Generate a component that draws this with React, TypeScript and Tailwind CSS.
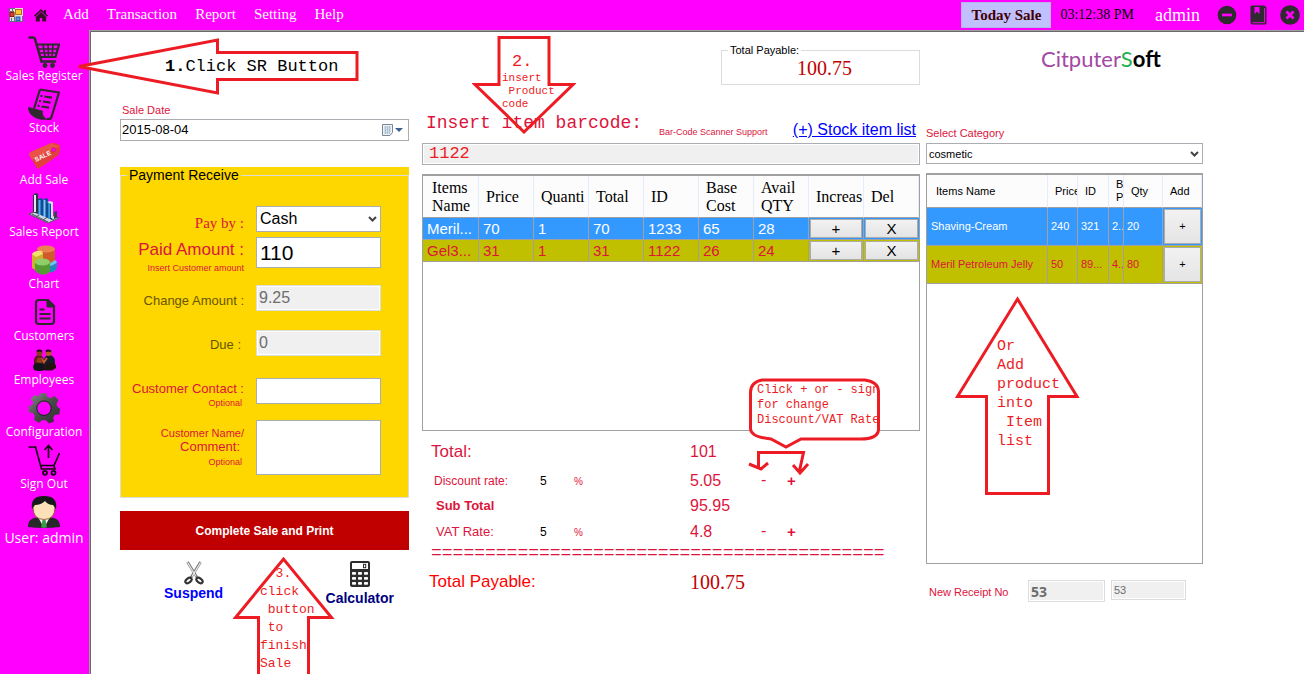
import React from "react";

const sans = "font-['Liberation_Sans',Arial,sans-serif]";
const serif = "font-['Liberation_Serif','Times_New_Roman',serif]";
const mono = "font-['Liberation_Mono',monospace]";
const open = "font-['Open_Sans','Noto_Sans',sans-serif]";

/* ---------- Toolbar icons ---------- */

function FormIcon() {
  return (
    <svg width="14" height="14" viewBox="0 0 14 14" aria-hidden="true">
      <rect width="14" height="14" fill="#e4e0dc" />
      <path d="M.5 0v14M0 .5h6M0 3.5h5M3.500 0v4M0 13.500h14M2.500 10v4M5.500 9v5M13.500 8v5" stroke="#6c6c86" strokeWidth="1" />
      <rect x="6.500" y="1.500" width="6" height="5" fill="#fbc531" stroke="#a8761c" />
      <rect x="1" y="4.500" width="4" height="4" fill="#d8432c" stroke="#8d1f12" />
      <rect x="7" y="9" width="4" height="3.500" fill="#5b92e5" stroke="#2b5cb0" />
    </svg>
  );
}

function HomeIcon() {
  return (
    <svg width="14" height="14" viewBox="0 0 14 14" fill="#3a1028" aria-hidden="true">
      <path d="M7 1 0 7.600l1 1.100 6-5.500 6 5.500 1-1.100-2-1.900V2h-2v1.800z" />
      <path d="M7 4 1.800 9v4.500h4V10h2.400v3.500h4V9z" />
    </svg>
  );
}

function MinusIcon() {
  return (
    <svg width="20" height="20" viewBox="0 0 20 20" aria-hidden="true">
      <circle cx="10" cy="10" r="9.300" fill="#2f2a2f" />
      <rect x="5" y="8.600" width="10" height="2.700" fill="#f0f" />
    </svg>
  );
}

function BookIcon() {
  return (
    <svg width="17" height="20" viewBox="0 0 17 20" aria-hidden="true">
      <path d="M2 .5h12a2 2 0 0 1 1 .5l1.500 1.500V18a1.500 1.500 0 0 1-1.500 1.500H3A2.500 2.500 0 0 1 .5 17V2A1.500 1.500 0 0 1 2 .5z" fill="#2f2a2f" />
      <path d="M4.500 2h5v7L7 6.500 4.500 9z" fill="#f0f" />
      <path d="M2.500 17.700h12V3" fill="none" stroke="#f0f" strokeWidth=".9" />
    </svg>
  );
}

function CloseIcon() {
  return (
    <svg width="20" height="20" viewBox="0 0 20 20" aria-hidden="true">
      <circle cx="10" cy="10" r="9.800" fill="#2f2a2f" />
      <path d="m6.500 6.500 7 7M13.500 6.500l-7 7" stroke="#f0f" strokeWidth="2.700" />
    </svg>
  );
}

/* ---------- Sidebar icons ---------- */

function CartIcon() {
  return (
    <svg width="32" height="32" viewBox="0 0 32 32" fill="none" stroke="#2e2a2e" aria-hidden="true">
      <path d="M1.500 1.500h3.500q1.500 0 2 1.500l6.500 22.500h13.500" strokeWidth="2.500" strokeLinecap="round" />
      <path d="M8.500 8.500h22.500l-3.500 12.500H12" strokeWidth="2.200" />
      <path d="M9.500 13h20.500M10.800 17h18M15 8l2 13M20 8l.5 13M25 8l-1 13" strokeWidth="1.700" />
      <circle cx="17" cy="29.500" r="2.400" fill="#2e2a2e" stroke="none" />
      <circle cx="24.500" cy="29.500" r="2.400" fill="#2e2a2e" stroke="none" />
    </svg>
  );
}

function StockIcon() {
  return (
    <svg width="32" height="32" viewBox="0 0 32 32" fill="none" stroke="#2e2a2e" aria-hidden="true">
      <path d="M12 1.500 31 4.500 23.500 29c-.8 2-2.500 2.500-4.500 2" strokeWidth="2.200" strokeLinejoin="round" />
      <path d="M12 1.500 6 20.500" strokeWidth="2.200" />
      <path d="M.3 19.300 14.500 23c-.5 4 1.500 7.500 5 8-3 .9-5 .7-8 0-6-1.500-11-5-11.200-11.700z" fill="#2e2a2e" strokeWidth=".6" />
      <path d="M16.500 8.500l7.500 1.200M15 13.500l7.500 1.200M13.500 18.500l7.500 1.200" strokeWidth="2.200" />
      <path d="M12.500 8h2M11 13h2M9.500 17.800h2" strokeWidth="2.200" />
    </svg>
  );
}

function SaleIcon() {
  return (
    <svg width="32" height="32" viewBox="0 0 32 32" aria-hidden="true">
      <path d="M1 14.500Q1 13 2.500 12L23 3.200q2-.8 4 0l4.500 1.500q1.500 3 0 7.500-.5 2.500-2.500 4L11 28.500q-1.500 1-2.500-.8z" fill="#e23f3f" />
      <path d="M1 14.500Q1 13 2.500 12L23 3.200l8.500 3L4 20z" fill="#ea5348" />
      <circle cx="25.500" cy="9.800" r="2.200" fill="#f0f" stroke="#b52a3a" strokeWidth=".6" />
      <text x="8" y="22" transform="rotate(-26 8 22)" fontSize="6.500" fontWeight="700" fill="#fff" fontFamily="Liberation Sans">SALE</text>
    </svg>
  );
}

function ReportIcon() {
  return (
    <svg width="32" height="32" viewBox="0 0 32 32" aria-hidden="true">
      <path d="M1 22 20 31l11-5L12 18z" fill="#cfd6de" stroke="#515a66" />
      <path d="M4 22l16 8M9 20l17 8M8 25l9-6M15 28l9-6" stroke="#4a525e" strokeWidth="1" />
      <path d="M5 3l3-2 2 1v20l-5-2z" fill="#2b3441" />
      <path d="M6 3h2v17H6z" fill="#dce8f5" />
      <path d="M10 7l3-1 2 1v17l-5-2z" fill="#0e4b94" />
      <path d="M10.500 8h2v15h-2z" fill="#58adf0" />
      <path d="M15 8l3-2 2 1v19l-5-2z" fill="#0e4b94" />
      <path d="M15.500 8h2v17h-2z" fill="#7cc4fa" />
      <path d="M20 11l2-2 2 1v18l-4-2z" fill="#0e4b94" />
      <path d="M20.300 11h1.700v16h-1.700z" fill="#4299e3" />
      <path d="M19 10l3-1 3 1v16h-2V12z" fill="#d7e0e9" />
      <path d="M26 20l3-1v7l-3 1z" fill="#3a4351" />
    </svg>
  );
}

function ChartIcon() {
  return (
    <svg width="32" height="32" viewBox="0 0 32 32" aria-hidden="true">
      <path d="M9 5v16q10 4 18 0V5z" fill="#cf5a2c" />
      <ellipse cx="18" cy="5" rx="9" ry="3.500" fill="#ea8350" />
      <path d="M4 10v14q5 4 11 2V9z" fill="#cdb02c" />
      <path d="M4 10q3-4 10-3l1 3-7 3z" fill="#f0e070" />
      <path d="M21 20v8q6 1 8-4v-7z" fill="#2586bd" />
      <path d="M21 20l6-4 2 2q-2 3-8 4z" fill="#6cc7ee" />
      <path d="M7 18v9q8 7 15 1V17z" fill="#569c35" />
      <ellipse cx="14.500" cy="18" rx="7.500" ry="3.500" fill="#8fcf6a" />
    </svg>
  );
}

function CustomersIcon() {
  return (
    <svg width="32" height="32" viewBox="0 0 32 32" fill="none" stroke="#2e2a2e" aria-hidden="true">
      <path d="M20 4H11a3 3 0 0 0-3 3v18a3 3 0 0 0 3 3h12a3 3 0 0 0 3-3V10z" strokeWidth="2.200" />
      <path d="M19 3.500V11h7.500z" fill="#2e2a2e" strokeWidth="1" />
      <path d="M11.500 13.500h5M11.500 18h11M11.500 22.500h11" strokeWidth="2" />
    </svg>
  );
}

function EmployeesIcon() {
  return (
    <svg width="26" height="24" viewBox="0 0 26 24" aria-hidden="true">
      <path d="M3 12q1-5 5-5t5 5v7H3z" fill="#5a1c1c" />
      <path d="M13 12q1-5 5-5t6 5v7H13z" fill="#191a2a" />
      <circle cx="8.500" cy="5" r="3" fill="#8a3c1c" />
      <circle cx="17.500" cy="5" r="3" fill="#b4581f" />
      <path d="M6 3.500q2-2 5 0M15 3.500q2-2 5 0" stroke="#1b1010" strokeWidth="2" fill="none" />
      <path d="M10 10l3 4 3-4" stroke="#c9602a" strokeWidth="2" fill="none" />
      <circle cx="8.500" cy="12.500" r="3" fill="#8e3c1c" />
      <path d="M2 19q1-5 7-4t5 7q-6 2-11 0z" fill="#14131a" />
      <path d="M14 20q0-5 6-5t5 5l-4 2.500h-7z" fill="#23130e" />
    </svg>
  );
}

function GearIcon() {
  return (
    <svg width="32" height="32" viewBox="0 0 32 32" aria-hidden="true">
      <defs>
        <linearGradient id="gear" x1="0" y1="0" x2="1" y2="1">
          <stop offset="0" stopColor="#8a8a8a" />
          <stop offset=".5" stopColor="#4a4a4a" />
          <stop offset="1" stopColor="#2c2c2c" />
        </linearGradient>
      </defs>
      <path
        fill="url(#gear)"
        fillRule="evenodd"
        d="M12 1.500l6-.5 1.500 4 3 1 4-2L30.500 8 28.500 12l.8 3 2.700 1.500-.7 6-4.300.3-1.800 2.700.8 4-5 2-3-3.300h-4l-3 2.500-5-2.700.8-4.200-2-2.800-3.800-.5-.5-6 4-1.700.7-3L2.500 7l4-4 4 1.500zM16 9.500a6.700 6.700 0 1 0 .1 13.400A6.700 6.700 0 0 0 16 9.500z"
      />
      <circle cx="16" cy="16.200" r="7.300" fill="none" stroke="#222" strokeWidth="1" />
    </svg>
  );
}

function SignOutIcon() {
  return (
    <svg width="32" height="32" viewBox="0 0 32 32" fill="none" stroke="#120412" strokeWidth="1.700" aria-hidden="true">
      <path d="M.5 3h7l6 22h13.500l-1-3M12.500 21.500h13.500L31.500 9" />
      <path d="M20.500 14V2M16.500 6l4-4.500 4 4.500" />
      <circle cx="17" cy="28.800" r="2" />
      <circle cx="25.500" cy="28.800" r="2" />
    </svg>
  );
}

function UserIcon() {
  return (
    <svg width="32" height="32" viewBox="0 0 32 32" aria-hidden="true">
      <path d="M0 31q-.5-8 8-9.500h16q8.500 1.500 8 9.500-16 2-32 0z" fill="#26282a" />
      <path d="M10 21l6 11 6-11z" fill="#f2f4f4" />
      <path d="M14.500 24h3l1.500 7.500h-6z" fill="#3d9c48" />
      <path d="M5 11q0-10 11-10t11 10q0 12.500-11 12.500T5 11z" fill="#fbe0b8" stroke="#7a4a20" strokeWidth=".8" />
      <path d="M4 13Q2 0 16 0t12 13l-3-4q-5 0-8-4-4 4-10 4z" fill="#17181a" />
    </svg>
  );
}

/* ---------- Action icons ---------- */

function ScissorsIcon() {
  return (
    <svg width="20" height="24" viewBox="0 0 20 24" fill="none" aria-hidden="true">
      <path d="M3.500 1 13 16.500M16.500 1 7 16.500" stroke="#777" strokeWidth="2.600" />
      <path d="M3.500 1.500 12 15.500M16.500 1.500 8 15.500" stroke="#ececec" strokeWidth="1.200" />
      <ellipse cx="4.500" cy="19.500" rx="3.500" ry="2.200" transform="rotate(-38 4.500 19.500)" stroke="#333" strokeWidth="2.200" />
      <ellipse cx="15.500" cy="19.500" rx="3.500" ry="2.200" transform="rotate(38 15.500 19.500)" stroke="#333" strokeWidth="2.200" />
    </svg>
  );
}

function CalculatorIcon() {
  return (
    <svg width="20" height="26" viewBox="0 0 20 26" aria-hidden="true">
      <rect width="20" height="26" rx="2" fill="#2e2e2e" />
      <rect x="2" y="2" width="16" height="6" fill="#fff" />
      <rect x="13.500" y="3.300" width="2.200" height="3.400" fill="none" stroke="#2e2e2e" />
      {[11, 16, 21].map((y) => (
        <g key={y} fill="#fff">
          <rect x="2" y={y} width="4" height="2.800" rx=".8" />
          <rect x="8" y={y} width="4" height="2.800" rx=".8" />
          <rect x="14" y={y} width="4" height="2.800" rx=".8" />
        </g>
      ))}
    </svg>
  );
}

function ChevronIcon() {
  return (
    <svg className="pointer-events-none absolute right-1 top-1/2 -translate-y-1/2" width="9" height="7" viewBox="0 0 9 7" fill="none" aria-hidden="true">
      <path d="M1 1.500 4.500 5 8 1.500" stroke="#444" strokeWidth="2" />
    </svg>
  );
}

function CalendarIcon() {
  return (
    <svg width="21" height="14" viewBox="0 0 21 14" aria-hidden="true">
      <path d="M.5 1.500h10v8l-2.500 3H.5z" fill="#eef3f8" stroke="#7b8794" />
      <path d="M2 4h7M2 6h7M2 8h7M2 10h6M3.500 3v8M5.500 3v8M7.500 3v8" stroke="#9fb3cb" strokeWidth=".7" />
      <path d="M13 5h8l-4 4z" fill="#3f5f92" />
    </svg>
  );
}

/* ---------- Sidebar ---------- */

const navItems = [
  { label: "Sales Register", icon: <CartIcon />, box: "h-8" },
  { label: "Stock", icon: <StockIcon />, box: "h-8" },
  { label: "Add Sale", icon: <SaleIcon />, box: "h-8" },
  { label: "Sales Report", icon: <ReportIcon />, box: "h-8" },
  { label: "Chart", icon: <ChartIcon />, box: "h-8" },
  { label: "Customers", icon: <CustomersIcon />, box: "h-8" },
  { label: "Employees", icon: <EmployeesIcon />, box: "h-6" },
  { label: "Configuration", icon: <GearIcon />, box: "h-8" },
  { label: "Sign Out", icon: <SignOutIcon />, box: "h-8" },
];

function Sidebar() {
  return (
    <nav className={`flex w-[89px] shrink-0 flex-col items-center gap-1 bg-[#ff00ff] pr-px pt-[6px] text-white ${open}`}>
      {navItems.map((item) => (
        <button key={item.label} type="button" className="flex w-full flex-col items-center whitespace-nowrap text-[12px] leading-4">
          <span className={`flex items-center justify-center ${item.box}`}>{item.icon}</span>
          {item.label}
        </button>
      ))}
      <div className="flex w-full flex-col items-center whitespace-nowrap text-[14px] leading-5">
        <UserIcon />
        User: admin
      </div>
    </nav>
  );
}

function TopBar() {
  return (
    <header className={`flex h-[30px] items-center bg-[#ff00ff] pl-[9px] pr-1 text-[14px] text-white ${serif}`}>
      <FormIcon />
      <span className="ml-[11px] mr-[15px]"><HomeIcon /></span>
      <nav className="flex gap-[18px] pb-px text-[15px]">
        <button type="button">Add</button>
        <button type="button">Transaction</button>
        <button type="button">Report</button>
        <button type="button">Setting</button>
        <button type="button">Help</button>
      </nav>
      <div className="ml-auto flex items-center">
        <button type="button" className="h-[26px] w-[90px] border border-[#b4b4e8] bg-[#c0c0ff] text-[15px] font-bold leading-5 text-[#400000]">
          Today Sale
        </button>
        <span className="ml-[9px] pb-[2px] text-black">03:12:38 PM</span>
        <span className="ml-[21px] text-[18px]">admin</span>
        <button type="button" aria-label="Minimize" className="ml-[17px]"><MinusIcon /></button>
        <button type="button" aria-label="Bookmarks" className="ml-[13px]"><BookIcon /></button>
        <button type="button" aria-label="Close" className="ml-[13px]"><CloseIcon /></button>
      </div>
    </header>
  );
}

/* ---------- Payment column ---------- */

const field = "block w-[125px] border border-[#abadb3] bg-white px-[3px] text-black outline-none";
const readOnlyField = "block h-[26px] w-[125px] border border-[#dcdcdc] bg-[#f0f0f0] px-[2px] text-[16px] text-[#6d6d6d] shadow-[inset_0_0_0_1px_#fff] outline-none";
const fieldLabel = "block w-[123px] text-right";

function PaymentPanel() {
  return (
    <div className="mt-[26px] h-[331px] bg-[#ffd700]">
      <fieldset className="h-full min-w-0 border border-[#dcdcdc]">
        <legend className="ml-[6px] px-[2px] text-[14px] leading-4 text-black">Payment Receive</legend>
        <div className="flex flex-col pt-[23px] text-[13px] leading-4 text-[#dc143c]">
          <div className="flex gap-3">
            <label htmlFor="payBy" className={`${fieldLabel} ${serif} pt-[9px] text-[15px]`}>Pay by :</label>
            <div className="relative">
              <select id="payBy" defaultValue="Cash" className={`${field} h-[26px] appearance-none text-[16px]`}>
                <option>Cash</option>
              </select>
              <ChevronIcon />
            </div>
          </div>
          <div className="mt-[5px] flex gap-3">
            <label htmlFor="paid" className={`${fieldLabel} pt-1`}>
              <span className="block text-[17px] leading-[18px]">Paid Amount :</span>
              <span className="block text-[9px] leading-[18px]">Insert Customer amount</span>
            </label>
            <input id="paid" defaultValue="110" className={`${field} h-[31px] text-[21px]`} />
          </div>
          <div className="mt-2 flex gap-3 text-[#665600]">
            <label htmlFor="change" className={`${fieldLabel} pt-2`}>Change Amount :</label>
            <input id="change" readOnly value="9.25" className={readOnlyField} />
          </div>
          <div className="mt-[19px] flex gap-3 text-[#665600]">
            <label htmlFor="due" className={`${fieldLabel} pr-[3px] pt-[7px]`}>Due :</label>
            <input id="due" readOnly value="0" className={readOnlyField} />
          </div>
          <div className="mt-[22px] flex gap-3">
            <label htmlFor="contact" className={`${fieldLabel} pt-[3px]`}>
              Customer Contact :
              <span className="block pr-[2px] text-[9px] leading-3">Optional</span>
            </label>
            <input id="contact" className={`${field} h-[26px] text-[13px]`} />
          </div>
          <div className="mt-[11px] flex gap-3">
            <label htmlFor="comment" className={`${fieldLabel} pt-[6px]`}>
              <span className="block text-[11px] leading-[14px]">Customer Name/</span>
              <span className="block pr-1 leading-[14px]">Comment:</span>
              <span className="block pr-[2px] text-[9px] leading-4">Optional</span>
            </label>
            <textarea id="comment" className={`${field} h-[55px] resize-none text-[13px]`} />
          </div>
        </div>
      </fieldset>
    </div>
  );
}

function PaymentColumn() {
  return (
    <section className="relative w-[289px] shrink-0 pt-[70px]">
      <label htmlFor="saleDate" className="block pb-px pl-[2px] text-[11px] leading-4 text-[#dc143c]">Sale Date</label>
      <div className="flex h-[22px] items-center border border-[#abadb3] pr-[5px]">
        <input id="saleDate" defaultValue="2015-08-04" className="min-w-0 flex-1 pl-px text-[13px] leading-4 text-black outline-none" />
        <button type="button" aria-label="Open calendar"><CalendarIcon /></button>
      </div>
      <PaymentPanel />
      <button type="button" className="mt-[13px] block h-[39px] w-full bg-[#c00000] text-[12px] font-bold text-white">
        Complete Sale and Print
      </button>
      <div className="flex justify-between pl-11 pr-[15px] pt-[11px] text-[14px] font-bold leading-4">
        <button type="button" className="flex flex-col items-center self-start text-[#0000ff]">
          <ScissorsIcon />
          Suspend
        </button>
        <button type="button" className="flex flex-col items-center gap-[3px] text-[#000080]">
          <CalculatorIcon />
          Calculator
        </button>
      </div>

      <div className={`pointer-events-none absolute left-[113px] top-[524px] text-[13px] leading-[18px] text-[#ed1c24] ${mono}`}>
        <svg className="absolute left-0 top-0" width="102" height="130" viewBox="0 0 102 130" fill="none" stroke="#ed1c24" strokeWidth="3" aria-hidden="true">
          <path d="M25.500 130V61.500H2.500L50.500 3l48 58.500h-23V130" />
        </svg>
        <pre className={`pl-[27px] pt-[9px] ${mono}`}>{"  3.\nclick\n button\n to\nfinish\nSale"}</pre>
      </div>
    </section>
  );
}

/* ---------- Sale column ---------- */

const cartHeads = ["Items Name", "Price", "Quanti", "Total", "ID", "Base Cost", "Avail QTY", "Increas", "Del"];
const cartRows = [
  { cells: ["Meril...", "70", "1", "70", "1233", "65", "28"], tone: "bg-[#3399ff] text-white" },
  { cells: ["Gel3...", "31", "1", "31", "1122", "26", "24"], tone: "bg-[#c0c000] text-[#dc143c]" },
];
const cellButton = "block w-full border border-[#acacac] bg-gradient-to-b from-[#f2f2f2] to-[#e4e4e4] text-black";

function CartTable() {
  return (
    <div className="mt-[9px] h-[257px] border border-t-2 border-[#a0a0a0]">
      <table className="w-full table-fixed border-separate border-spacing-0">
        <thead>
          <tr className={`h-[42px] bg-[#fcfcfc] text-left text-[16px] leading-[18px] text-black ${serif}`}>
            {cartHeads.map((head, i) => (
              <th
                key={head}
                className={`overflow-hidden border-b border-r border-b-[#a0a0a0] border-r-[#e3eefa] p-0 font-normal ${i === 0 ? "w-[56px] pl-[9px]" : "w-[55px] pl-[7px]"}`}
              >
                {head}
              </th>
            ))}
          </tr>
        </thead>
        <tbody>
          {cartRows.map((row) => (
            <tr key={row.cells[0]} className={`h-[22px] text-[15px] leading-5 ${row.tone}`}>
              {row.cells.map((cell, i) => (
                <td key={i} className="overflow-hidden whitespace-nowrap border-b border-r border-[#a0a0a0] p-0 pl-1">{cell}</td>
              ))}
              <td className="border-b border-r border-[#a0a0a0] p-px"><button type="button" className={`${cellButton} h-[19px] leading-4`}>+</button></td>
              <td className="border-b border-[#a0a0a0] p-px"><button type="button" className={`${cellButton} h-[19px] leading-4`}>X</button></td>
            </tr>
          ))}
        </tbody>
      </table>
    </div>
  );
}

const totalsGrid = "grid grid-cols-[118px_34px_116px_69px_28px_1fr] items-center";

function RateButtons() {
  return (
    <>
      <button type="button" className="justify-self-start px-[2px] pb-[2px] text-[16px] leading-5">-</button>
      <button type="button" className="justify-self-start text-[15px] font-bold leading-5">+</button>
    </>
  );
}

function Totals() {
  return (
    <div className="pt-[5px] text-[#dc143c]">
      <div className={`${totalsGrid} h-8`}>
        <span className="col-span-3 pl-[9px] text-[17px]">Total:</span>
        <span className="text-[16px]">101</span>
      </div>
      <div className={`${totalsGrid} h-[26px]`}>
        <span className="pl-3 text-[12px]">Discount rate:</span>
        <span className="text-[12px] text-black">5</span>
        <span className="text-[10px]">%</span>
        <span className="text-[16px]">5.05</span>
        <RateButtons />
      </div>
      <div className={`${totalsGrid} h-6`}>
        <span className="col-span-3 pl-[14px] text-[13px] font-bold">Sub Total</span>
        <span className="text-[16px]">95.95</span>
      </div>
      <div className={`${totalsGrid} h-7`}>
        <span className="pl-[14px] text-[13px]">VAT Rate:</span>
        <span className="text-[12px] text-black">5</span>
        <span className="text-[10px]">%</span>
        <span className="text-[16px]">4.8</span>
        <RateButtons />
      </div>
      <div className={`whitespace-nowrap pl-[9px] text-[18px] leading-[14px] ${mono}`}>
        {"=".repeat(42)}
      </div>
      <div className={`${totalsGrid} mt-[7px] h-7`}>
        <span className="col-span-3 pl-[7px] text-[17px] text-[#ff0000]">Total Payable:</span>
        <span className={`text-[20px] text-[#c00000] ${serif}`}>100.75</span>
      </div>
    </div>
  );
}

function SaleColumn() {
  return (
    <section className="relative ml-[13px] min-w-[498px] flex-1 pt-[11px]">
      <fieldset className="ml-auto h-[42px] w-[199px] border border-[#dcdcdc]">
        <legend className="ml-[6px] px-[2px] text-[11px] leading-[14px] text-black">Total Payable:</legend>
        <p className={`pl-2 text-center text-[20px] leading-[22px] text-[#c00000] ${serif}`}>100.75</p>
      </fieldset>
      <div className="mt-[26px] flex h-[31px] items-end">
        <label htmlFor="barcode" className={`self-start pl-1 text-[18px] leading-6 text-[#dc143c] ${mono}`}>Insert item barcode:</label>
        <span className="ml-[17px] whitespace-nowrap text-[9px] leading-5 text-[#dc143c]">Bar-Code Scanner Support</span>
        <a href="#stock" className="ml-auto mr-1 whitespace-nowrap text-[16px] leading-6 text-[#0000ff] underline">(+) Stock item list</a>
      </div>
      <input
        id="barcode"
        defaultValue="1122"
        className={`mt-px block h-[22px] w-full border border-[#abadb3] bg-[#f0f0f0] px-[6px] text-[17px] text-[#ed1c24] shadow-[inset_0_0_0_1px_#fff] outline-none ${mono}`}
      />
      <CartTable />
      <Totals />

      <div className={`pointer-events-none absolute left-[50px] top-1 text-[11px] leading-[13px] text-[#ed1c24] ${mono}`}>
        <svg className="absolute left-0 top-0" width="104" height="98" viewBox="0 0 104 98" fill="none" stroke="#ed1c24" strokeWidth="3" aria-hidden="true">
          <path d="M27 1.500h50v47h24L52 96 3 48.500h24z" />
        </svg>
        <p className="pl-10 pt-4 text-[17px] leading-5">2.</p>
        <pre className={`pl-[30px] ${mono}`}>{"insert\n Product\ncode"}</pre>
      </div>

      <div className={`pointer-events-none absolute right-[38px] top-[346px] w-[134px] text-[12px] leading-[15px] text-[#ed1c24] ${mono}`}>
        <svg className="absolute left-0 top-0" width="134" height="98" viewBox="0 0 134 98" fill="none" stroke="#ed1c24" strokeWidth="3" aria-hidden="true">
          <path d="M14 2h103q13 2 13.500 11v39q-1 9-18 9H53l-15 8-15-8q-20-2-20.500-10V14Q3 4 14 2z" fill="#fff" />
          <path d="M10.500 90V74.500h45L51 95M1 86l12 5 7-6M45 87l7 8 8-9" />
        </svg>
        <pre className={`relative pl-[9px] pt-[5px] ${mono}`}>{"Click + or - sign\nfor change\nDiscount/VAT Rate"}</pre>
      </div>
    </section>
  );
}

/* ---------- Stock column ---------- */

const stockHeads = [
  { text: "Items Name", width: "w-[121px] pl-[9px]" },
  { text: "Price", width: "w-[30px] pl-[7px]" },
  { text: "ID", width: "w-[31px] pl-[7px]" },
  { text: "B P", width: "w-[15px] pl-[7px]" },
  { text: "Qty", width: "w-[39px] pl-[7px]" },
  { text: "Add", width: "w-[39px] pl-[7px]" },
];
const stockRows = [
  { cells: ["Shaving-Cream", "240", "321", "2..", "20"], tone: "bg-[#3399ff] text-white" },
  { cells: ["Meril Petroleum Jelly", "50", "89...", "4..", "80"], tone: "bg-[#c0c000] text-[#dc143c]" },
];

function StockColumn() {
  return (
    <section className="relative ml-[6px] w-[277px] shrink-0 pt-[15px] text-[11px]">
      <div className="pl-[115px] font-['Lato',sans-serif] text-[22px] leading-6">
        <span className="text-[#a349a4]">Citputer</span>
        <span className="text-[#22b14c]">S</span>
        <span className="font-bold text-black">oft</span>
      </div>
      <label htmlFor="category" className="mt-[54px] block leading-4 text-[#dc143c]">Select Category</label>
      <div className="relative mt-[2px]">
        <select id="category" defaultValue="cosmetic" className="block h-[21px] w-full appearance-none border border-[#abadb3] bg-white pl-[2px] leading-4 text-black outline-none">
          <option>cosmetic</option>
        </select>
        <ChevronIcon />
      </div>
      <div className="mt-[9px] h-[391px] border border-t-2 border-[#a0a0a0]">
        <table className="w-full table-fixed border-separate border-spacing-0">
          <thead>
            <tr className="h-[33px] bg-[#fcfcfc] text-left leading-[13px] text-black">
              {stockHeads.map((head) => (
                <th key={head.text} className={`overflow-hidden border-b border-r border-b-[#a0a0a0] border-r-[#e3eefa] py-0 pr-0 font-normal ${head.width}`}>
                  {head.text}
                </th>
              ))}
            </tr>
          </thead>
          <tbody>
            {stockRows.map((row) => (
              <tr key={row.cells[0]} className={`h-[38px] ${row.tone}`}>
                {row.cells.map((cell, i) => (
                  <td key={i} className={`overflow-hidden whitespace-nowrap border-b border-r border-[#a0a0a0] py-0 pr-0 ${i === 0 ? "pl-1" : "pl-[3px]"}`}>{cell}</td>
                ))}
                <td className="border-b border-[#a0a0a0] p-px"><button type="button" className={`${cellButton} h-[35px]`}>+</button></td>
              </tr>
            ))}
          </tbody>
        </table>
      </div>
      <div className="flex items-start pl-[3px] pt-4 text-[#dc143c]">
        <label htmlFor="receipt" className="w-[99px] pt-1 leading-4">New Receipt No</label>
        <input id="receipt" readOnly value="53" className="h-[22px] w-[77px] border border-[#dcdcdc] bg-[#f0f0f0] px-[2px] font-['Noto_Sans',sans-serif] text-[14px] font-bold text-[#6d6d6d] shadow-[inset_0_0_0_1px_#fff] outline-none" />
        <input aria-label="Receipt copy" readOnly value="53" className="ml-[6px] h-5 w-[75px] border border-[#dcdcdc] bg-[#f0f0f0] px-[2px] text-[11px] text-[#6d6d6d] shadow-[inset_0_0_0_1px_#fff] outline-none" />
      </div>

      <div className={`pointer-events-none absolute left-[29px] top-[264px] text-[15px] leading-[19px] text-[#ed1c24] ${mono}`}>
        <svg className="absolute left-0 top-0" width="126" height="202" viewBox="0 0 126 202" fill="none" stroke="#ed1c24" strokeWidth="3" aria-hidden="true">
          <path d="M62.500 3 122 100.500H93.500v97h-62v-97H2.500z" />
        </svg>
        <pre className={`pl-[42px] pt-[41px] ${mono}`}>{"Or\nAdd\nproduct\ninto\n Item\nlist"}</pre>
      </div>
    </section>
  );
}

export default function App() {
  return (
    <div className={`flex min-h-screen flex-col overflow-hidden bg-white ${sans}`}>
      <TopBar />
      <div className="flex flex-1">
        <Sidebar />
        <main className="relative flex min-w-0 flex-1 border-l border-t border-[#a0a0a0] pl-[30px] pr-[101px] pt-px shadow-[inset_1px_1px_0_#696969]">
          <PaymentColumn />
          <SaleColumn />
          <StockColumn />
          <div className={`pointer-events-none absolute left-[-14px] top-1 text-[17px] leading-6 text-black ${mono}`}>
            <svg className="absolute left-0 top-0" width="286" height="62" viewBox="0 0 286 62" fill="#fff" stroke="#ed1c24" strokeWidth="3" aria-hidden="true">
              <path d="M3 31.500 141.500 5v12.500H281v27H141.500V58z" />
            </svg>
            <p className="relative pl-[89px] pt-5"><b>1.</b>Click SR Button</p>
          </div>
        </main>
      </div>
    </div>
  );
}
